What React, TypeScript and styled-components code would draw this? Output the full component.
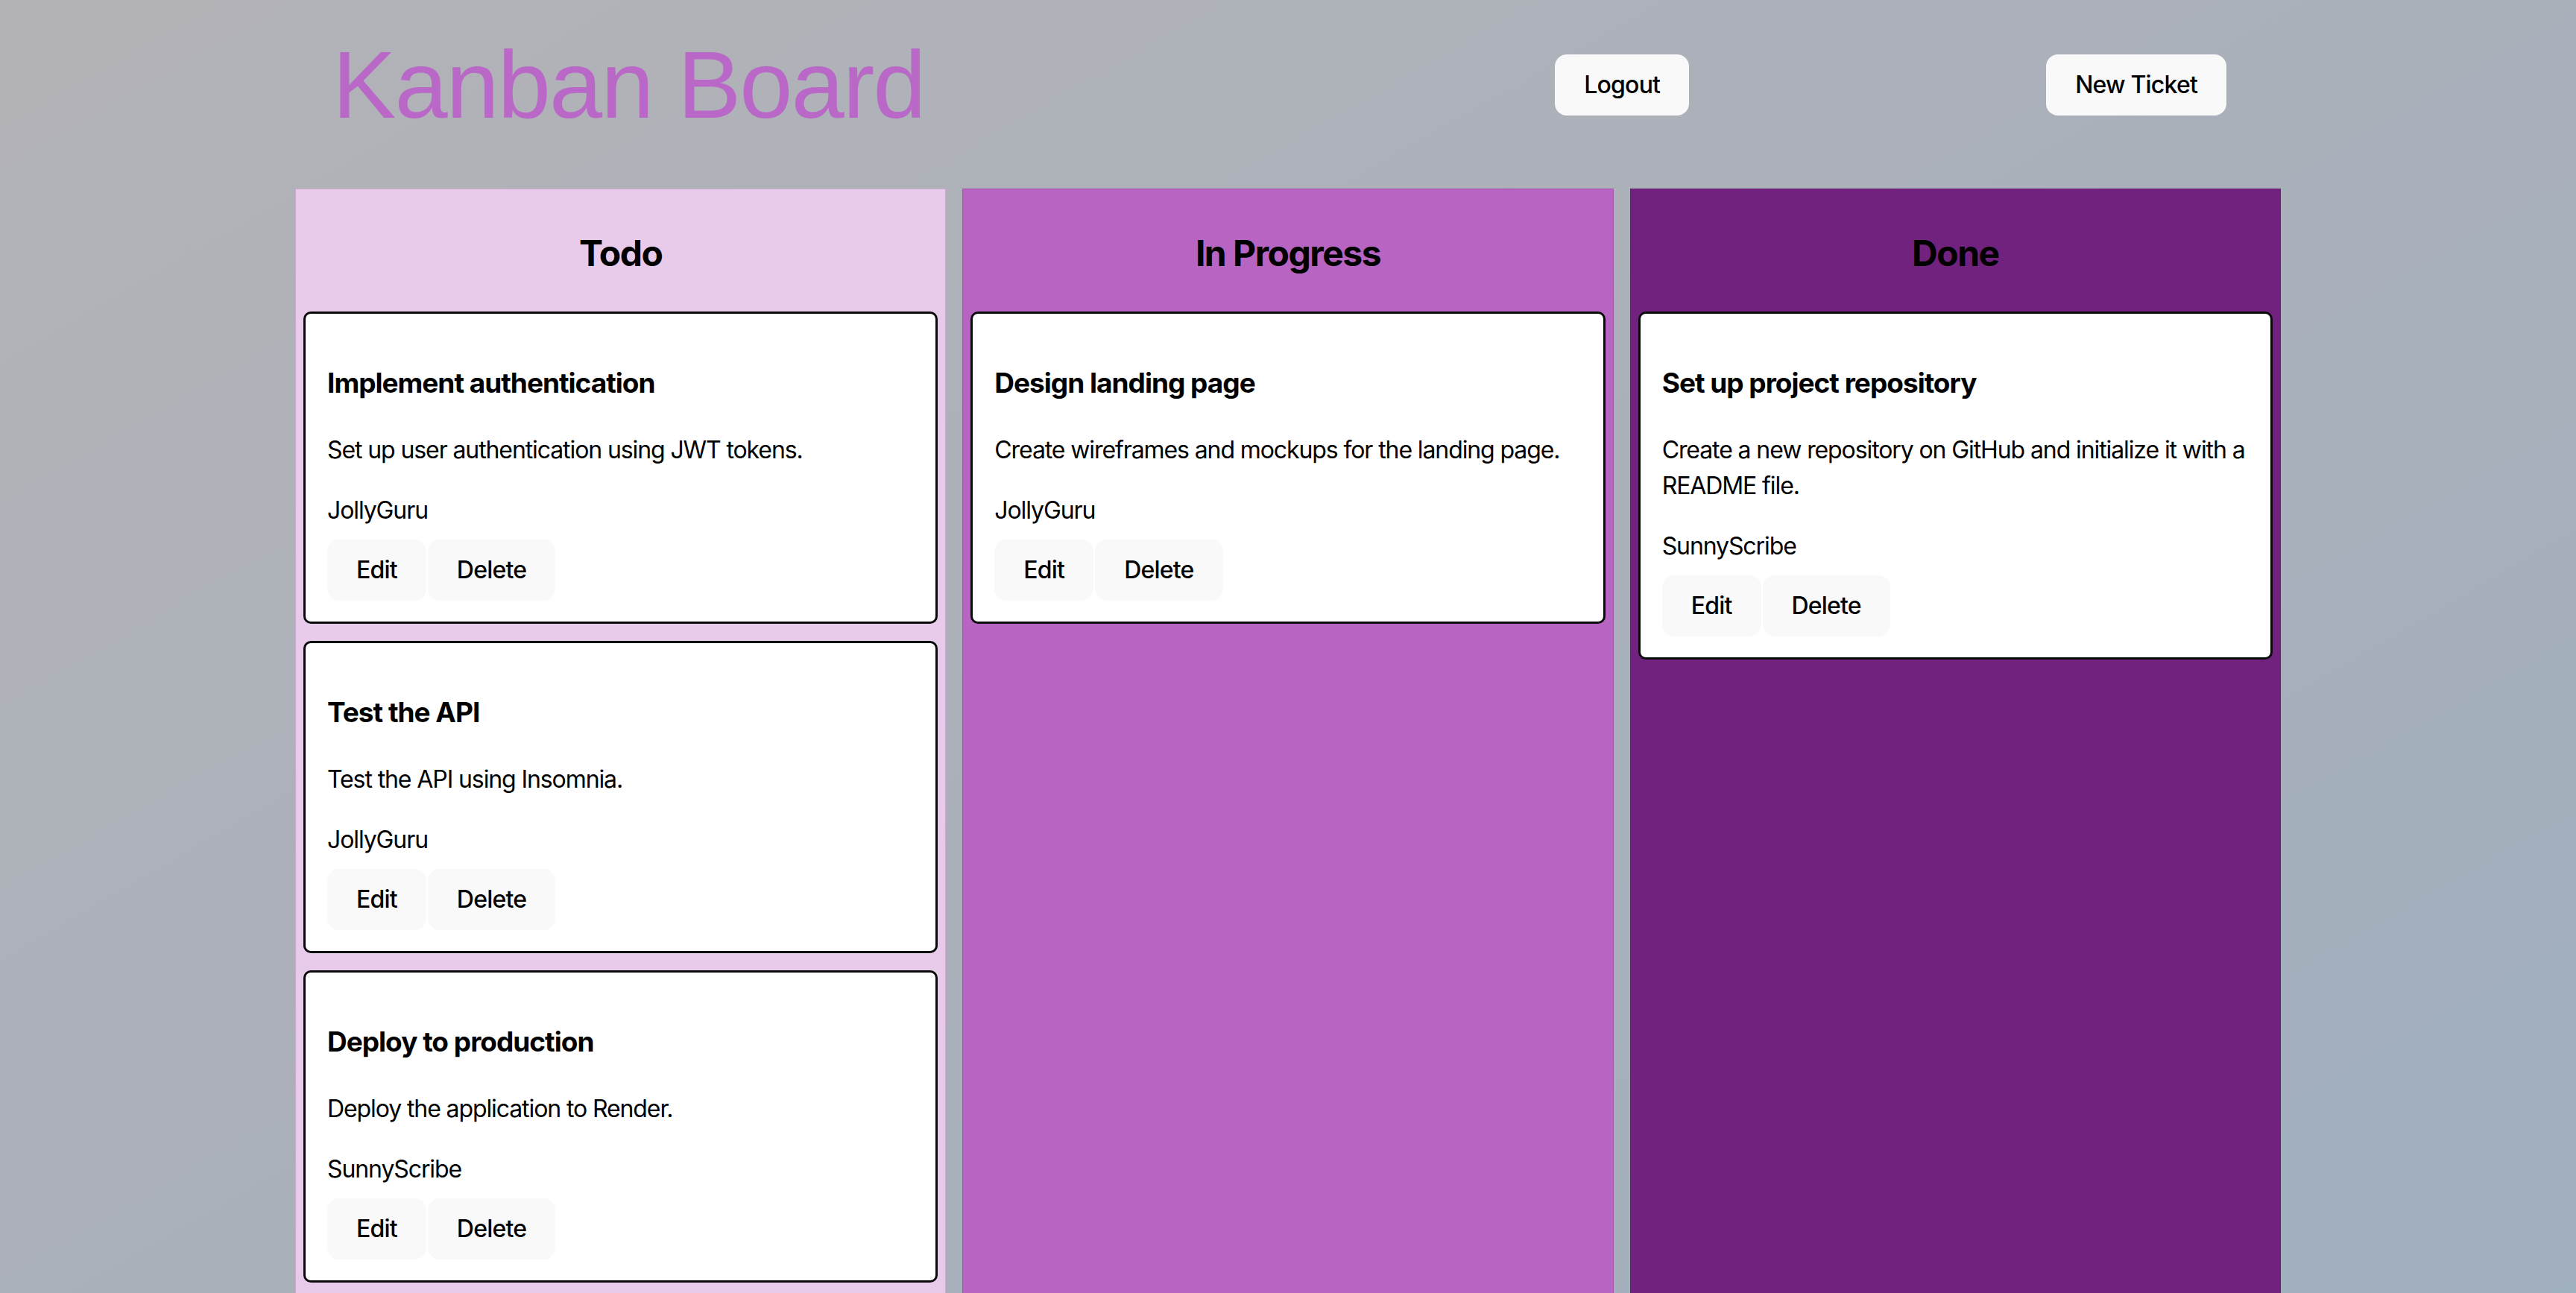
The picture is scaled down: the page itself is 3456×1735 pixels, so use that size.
import styled, { createGlobalStyle } from "styled-components";

type Ticket = {
  id: number;
  name: string;
  description: string;
  assignee: string;
};

type Lane = {
  title: string;
  color: string;
  tickets: Ticket[];
};

const lanes: Lane[] = [
  {
    title: "Todo",
    color: "#e8cbea",
    tickets: [
      {
        id: 1,
        name: "Implement authentication",
        description: "Set up user authentication using JWT tokens.",
        assignee: "JollyGuru",
      },
      {
        id: 2,
        name: "Test the API",
        description: "Test the API using Insomnia.",
        assignee: "JollyGuru",
      },
      {
        id: 3,
        name: "Deploy to production",
        description: "Deploy the application to Render.",
        assignee: "SunnyScribe",
      },
    ],
  },
  {
    title: "In Progress",
    color: "#b764c3",
    tickets: [
      {
        id: 4,
        name: "Design landing page",
        description: "Create wireframes and mockups for the landing page.",
        assignee: "JollyGuru",
      },
    ],
  },
  {
    title: "Done",
    color: "#71227f",
    tickets: [
      {
        id: 5,
        name: "Set up project repository",
        description:
          "Create a new repository on GitHub and initialize it with a README file.",
        assignee: "SunnyScribe",
      },
    ],
  },
];

const GlobalStyle = createGlobalStyle`
  html, body {
    margin: 0;
    padding: 0;
  }
  body {
    font-family: Inter, "Noto Sans", sans-serif;
    line-height: 1.5;
    color: #000;
    overflow: hidden;
  }
`;

const Page = styled.div`
  min-height: 100vh;
  background: linear-gradient(150deg, #b3b3b7 0%, #aab0ba 50%, #a1b0bf 100%);
`;

const Wrapper = styled.div`
  width: 2664px;
  margin: 0 auto;
`;

const Header = styled.header`
  height: 227px;
  margin-bottom: 26px;
  display: flex;
  align-items: center;
  padding: 0 73px 0 50px;
  box-sizing: border-box;
`;

const Title = styled.h1`
  margin: 0;
  font-family: "Liberation Sans", Arial, sans-serif;
  font-weight: 400;
  font-size: 128px;
  line-height: 1;
  letter-spacing: -2px;
  color: #ba68c8;
`;

const HeaderActions = styled.div`
  margin-left: auto;
  display: flex;
  gap: 479px;
`;

const Button = styled.button`
  font-family: Inter, "Noto Sans", sans-serif;
  font-size: 32px;
  font-weight: 500;
  line-height: 42px;
  letter-spacing: -0.8px;
  padding: 19px 38px;
  color: #000;
  background: #f9f9f9;
  border: 1px solid transparent;
  border-radius: 16px;
  cursor: pointer;
`;

const Columns = styled.div`
  display: flex;
  gap: 22px;
`;

const Column = styled.section<{ $bg: string }>`
  flex: 1;
  min-width: 0;
  min-height: 1520px;
  background: ${(p) => p.$bg};
  border: 1px solid rgba(60, 20, 70, 0.18);
  padding: 0 10px;
`;

const ColumnTitle = styled.h2`
  margin: 50px 0 42px;
  font-size: 48px;
  font-weight: 700;
  line-height: 72px;
  letter-spacing: -1.5px;
  text-align: center;
`;

const CardList = styled.div`
  display: flex;
  flex-direction: column;
  gap: 23px;
`;

const Card = styled.article`
  background: #fff;
  border: 3px solid #0a0a0a;
  border-radius: 10px;
  padding: 0 29px 28px;
`;

const CardTitle = styled.h3`
  margin: 67px 0 0;
  font-size: 37px;
  font-weight: 700;
  line-height: 52px;
  letter-spacing: -1px;
`;

const CardText = styled.p<{ $gap: number }>`
  margin: ${(p) => p.$gap}px 0 0;
  font-size: 32px;
  line-height: 48px;
  letter-spacing: -1.1px;
`;

const CardActions = styled.div`
  margin-top: 15px;
  display: flex;
  gap: 2px;
`;

const TicketCard = ({ ticket }: { ticket: Ticket }) => (
  <Card>
    <CardTitle>{ticket.name}</CardTitle>
    <CardText $gap={40}>{ticket.description}</CardText>
    <CardText $gap={33}>{ticket.assignee}</CardText>
    <CardActions>
      <Button>Edit</Button>
      <Button>Delete</Button>
    </CardActions>
  </Card>
);

const App = () => {
  return (
    <Page>
      <GlobalStyle />
      <Wrapper>
        <Header>
          <Title>Kanban Board</Title>
          <HeaderActions>
            <Button>Logout</Button>
            <Button>New Ticket</Button>
          </HeaderActions>
        </Header>
        <Columns>
          {lanes.map((lane) => (
            <Column key={lane.title} $bg={lane.color}>
              <ColumnTitle>{lane.title}</ColumnTitle>
              <CardList>
                {lane.tickets.map((t) => (
                  <TicketCard key={t.id} ticket={t} />
                ))}
              </CardList>
            </Column>
          ))}
        </Columns>
      </Wrapper>
    </Page>
  );
};

export default App;
